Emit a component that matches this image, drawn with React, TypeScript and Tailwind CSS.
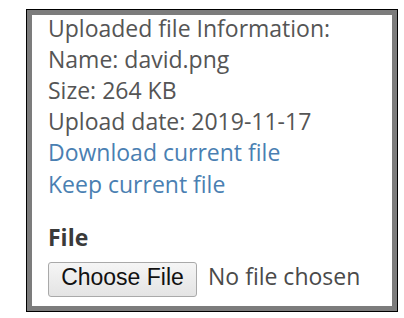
export default function App() {
  return (
    <div className="min-h-screen bg-white pl-[26px] pt-[9px]">
      <div className="w-[372px] h-[303px] border border-black">
        <div className="h-full border-[5px] border-[#7c7c7c] bg-white pl-[16px] font-['Open_Sans',sans-serif] text-[23px] leading-[31.2px] text-[#555555]">
          <div className="-mt-[2.5px]">
            <div>Uploaded file Information:</div>
            <div>Name: david.png</div>
            <div>Size: 264 KB</div>
            <div>Upload date: 2019-11-17</div>
            <div className="text-[#4a7fb2]">Download current file</div>
            <div className="text-[#4a7fb2]">Keep current file</div>
            <div className="mt-[22px] font-bold text-[#3a3a3a]">File</div>
            <div className="mt-[8px] flex items-baseline">
              <button className="h-[35px] w-[149px] rounded-[3px] border border-[#a9a9a9] bg-gradient-to-b from-[#f5f5f5] to-[#e4e4e4] pb-[5px] font-['Liberation_Sans',Arial,sans-serif] text-[23px] leading-none text-[#111]">
                Choose File
              </button>
              <span className="ml-[11px] text-[#4a4a4a]">No file chosen</span>
            </div>
          </div>
        </div>
      </div>
    </div>
  );
}
